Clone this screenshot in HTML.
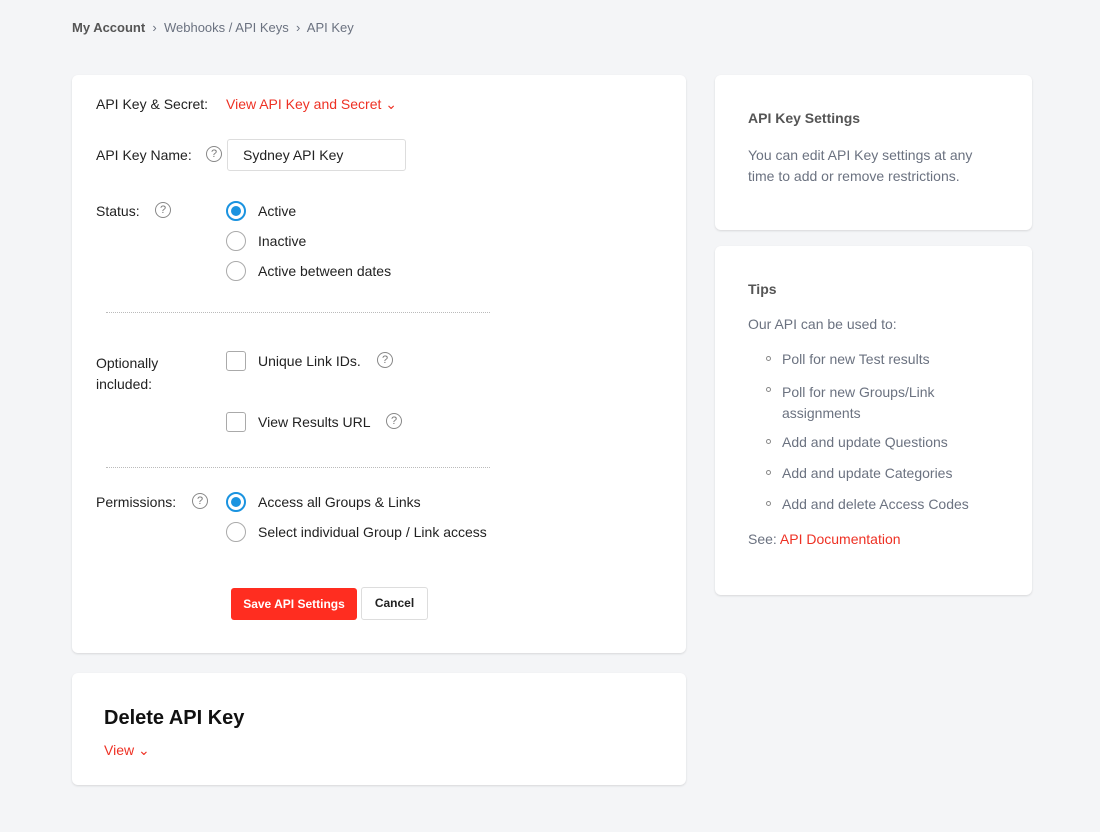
<!DOCTYPE html>
<html><head><meta charset="utf-8"><style>
*{box-sizing:border-box;margin:0;padding:0}
body{width:1100px;height:832px;background:#f4f5f7;font-family:"Liberation Sans",Arial,sans-serif;font-size:14px;color:#222;position:relative;overflow:hidden}
.a{position:absolute;white-space:nowrap}
.card{position:absolute;background:#fff;border-radius:6px;box-shadow:0 1px 2px rgba(0,0,0,.12)}
.red{color:#ee3124}
.q{position:absolute;width:16px;height:16px;border:1px solid #888;border-radius:50%;font-size:11px;color:#777;text-align:center;line-height:14px}
.r{position:absolute;width:20px;height:20px;border:1px solid #aaa;border-radius:50%}
.r.on{border:2px solid #1a93e0}
.r.on::after{content:"";position:absolute;left:3px;top:3px;width:10px;height:10px;border-radius:50%;background:#1a93e0}
.c{position:absolute;width:20px;height:20px;border:1px solid #aaa;border-radius:3px}
.hr{position:absolute;left:106px;width:384px;border-top:1px dotted #bbb}
.g{color:#6b7280}
.b{position:absolute;width:5px;height:5px;border:1px solid #888;border-radius:50%}
</style></head><body>
<div class="a" style="left:72px;top:20px;font-size:13px;color:#6b7280"><b style="color:#555">My Account</b> &nbsp;›&nbsp; Webhooks / API Keys &nbsp;›&nbsp; API Key</div>

<div class="card" style="left:72px;top:75px;width:614px;height:578px"></div>
<div class="a" style="left:96px;top:96px">API Key &amp; Secret:</div>
<div class="a red" style="left:226px;top:96px">View API Key and Secret ⌄</div>
<div class="a" style="left:96px;top:147px">API Key Name:</div>
<div class="q" style="left:206px;top:146px">?</div>
<div class="a" style="left:227px;top:139px;width:179px;height:32px;border:1px solid #ddd;border-radius:3px;padding:7px 15px">Sydney API Key</div>
<div class="a" style="left:96px;top:203px">Status:</div>
<div class="q" style="left:155px;top:202px">?</div>
<div class="r on" style="left:226px;top:201px"></div><div class="a" style="left:258px;top:203px">Active</div>
<div class="r" style="left:226px;top:231px"></div><div class="a" style="left:258px;top:233px">Inactive</div>
<div class="r" style="left:226px;top:261px"></div><div class="a" style="left:258px;top:263px">Active between dates</div>
<div class="hr" style="top:312px"></div>
<div class="a" style="left:96px;top:353px;line-height:21px">Optionally<br>included:</div>
<div class="c" style="left:226px;top:351px"></div><div class="a" style="left:258px;top:353px">Unique Link IDs.</div>
<div class="q" style="left:377px;top:352px">?</div>
<div class="c" style="left:226px;top:412px"></div><div class="a" style="left:258px;top:414px">View Results URL</div>
<div class="q" style="left:386px;top:413px">?</div>
<div class="hr" style="top:467px"></div>
<div class="a" style="left:96px;top:494px">Permissions:</div>
<div class="q" style="left:192px;top:493px">?</div>
<div class="r on" style="left:226px;top:492px"></div><div class="a" style="left:258px;top:494px">Access all Groups &amp; Links</div>
<div class="r" style="left:226px;top:522px"></div><div class="a" style="left:258px;top:524px">Select individual Group / Link access</div>
<div class="a" style="left:231px;top:588px;width:126px;height:32px;background:#ff2d20;border-radius:3px;color:#fff;font-size:12px;font-weight:bold;text-align:center;line-height:32px">Save API Settings</div>
<div class="a" style="left:361px;top:587px;width:67px;height:33px;border:1px solid #ddd;border-radius:3px;font-size:12px;font-weight:bold;text-align:center;line-height:31px">Cancel</div>

<div class="card" style="left:72px;top:673px;width:614px;height:112px"></div>
<div class="a" style="left:104px;top:707px;font-size:20px;font-weight:bold;color:#111">Delete API Key</div>
<div class="a red" style="left:104px;top:742px">View ⌄</div>

<div class="card" style="left:715px;top:75px;width:317px;height:155px"></div>
<div class="a" style="left:748px;top:110px;font-weight:bold;color:#555">API Key Settings</div>
<div class="a g" style="left:748px;top:145px;line-height:21px">You can edit API Key settings at any<br>time to add or remove restrictions.</div>

<div class="card" style="left:715px;top:246px;width:317px;height:349px"></div>
<div class="a" style="left:748px;top:281px;font-weight:bold;color:#555">Tips</div>
<div class="a g" style="left:748px;top:316px">Our API can be used to:</div>
<div class="b" style="left:766px;top:356px"></div><div class="a g" style="left:782px;top:351px">Poll for new Test results</div>
<div class="b" style="left:766px;top:387px"></div><div class="a g" style="left:782px;top:382px;line-height:21px">Poll for new Groups/Link<br>assignments</div>
<div class="b" style="left:766px;top:439px"></div><div class="a g" style="left:782px;top:434px">Add and update Questions</div>
<div class="b" style="left:766px;top:470px"></div><div class="a g" style="left:782px;top:465px">Add and update Categories</div>
<div class="b" style="left:766px;top:501px"></div><div class="a g" style="left:782px;top:496px">Add and delete Access Codes</div>
<div class="a g" style="left:748px;top:531px">See: <span class="red">API Documentation</span></div>
</body></html>
